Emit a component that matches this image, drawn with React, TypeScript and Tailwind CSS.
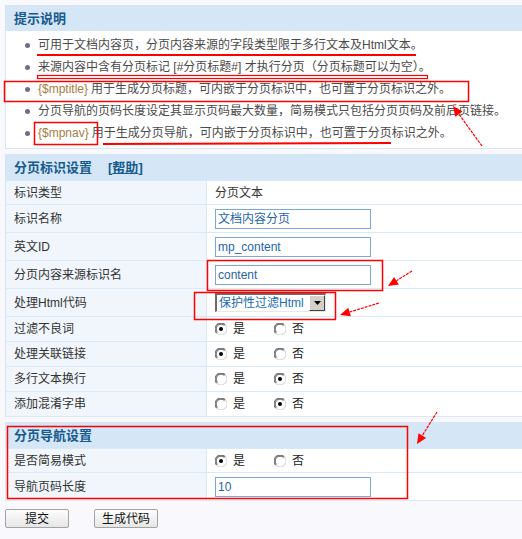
import React from "react";

const font = { fontFamily: '"Liberation Sans", "Noto Sans CJK SC", sans-serif' };

function Radio({ checked }: { checked: boolean }) {
  return (
    <svg width="12" height="12" viewBox="0 0 12 12" className="shrink-0">
      <circle cx="6" cy="6" r="5.5" fill="#ffffff" />
      <path d="M1.8 10.2 A5.5 5.5 0 0 1 10.2 1.8" fill="none" stroke="#7a7a7a" strokeWidth="1.2" />
      <path d="M10.2 1.8 A5.5 5.5 0 0 1 1.8 10.2" fill="none" stroke="#dcdcdc" strokeWidth="1.2" />
      <path d="M2.6 9.4 A4.6 4.6 0 0 1 9.4 2.6" fill="none" stroke="#404040" strokeWidth="0.8" />
      {checked && <circle cx="6" cy="6" r="2" fill="#000000" />}
    </svg>
  );
}

function YesNo({ yes }: { yes: boolean }) {
  return (
    <div className="flex items-center text-[12px] text-[#222]">
      <Radio checked={yes} />
      <span className="ml-[6px]">是</span>
      <span className="ml-[29px]">
        <Radio checked={!yes} />
      </span>
      <span className="ml-[6px]">否</span>
    </div>
  );
}

function TextBox({ value }: { value: string }) {
  return (
    <div className="w-[156px] h-[20px] border border-[#7aa7d6] bg-white flex items-center pl-[2px] text-[12px] text-[#1f64a8]">
      {value}
    </div>
  );
}

function Row({ label, h, children }: { label: string; h: string; children: React.ReactNode }) {
  return (
    <div className={`flex border-t border-[#d9e9f7] ${h}`}>
      <div className="w-[201px] shrink-0 bg-[#f0f6fb] border-r border-[#d9e9f7] flex items-center pl-[8px] text-[12px] text-[#333]">
        {label}
      </div>
      <div className="flex-1 bg-white flex items-center pl-[8px]">{children}</div>
    </div>
  );
}

function Header({ children }: { children: React.ReactNode }) {
  return (
    <div className="h-[25px] bg-[#d5e7f7] flex items-center pl-[8px] text-[13px] font-bold text-[#175a8e]">
      {children}
    </div>
  );
}

const tips: React.ReactNode[] = [
  <>可用于文档内容页，分页内容来源的字段类型限于多行文本及Html文本。</>,
  <>来源内容中含有分页标记 [#分页标题#] 才执行分页（分页标题可以为空）。</>,
  <>
    <span className="text-[#a47d42] mr-[3px]">{"{$mptitle}"}</span>用于生成分页标题，可内嵌于分页标识中，也可置于分页标识之外。
  </>,
  <>分页导航的页码长度设定其显示页码最大数量，简易模式只包括分页页码及前后页链接。</>,
  <>
    <span className="text-[#a47d42] mr-[3px]">{"{$mpnav}"}</span>用于生成分页导航，可内嵌于分页标识中，也可置于分页标识之外。
  </>,
];

function Arrow({ x1, y1, x2, y2 }: { x1: number; y1: number; x2: number; y2: number }) {
  const dx = x2 - x1;
  const dy = y2 - y1;
  const len = Math.hypot(dx, dy);
  const ux = dx / len;
  const uy = dy / len;
  const bx = x2 - ux * 10;
  const by = y2 - uy * 10;
  const px = -uy * 4.5;
  const py = ux * 4.5;
  return (
    <g>
      <line x1={x1} y1={y1} x2={bx} y2={by} stroke="#ff0000" strokeWidth="1.2" strokeDasharray="3 1" />
      <polygon points={`${x2},${y2} ${bx + px},${by + py} ${bx - px},${by - py}`} fill="#ff0000" />
    </g>
  );
}

export default function App() {
  return (
    <div className="relative w-[522px] h-[539px] overflow-hidden bg-[#f9f9fd] pt-[5px] pl-[5px]" style={font}>
      {/* tips panel */}
      <div className="w-[530px] border border-[#d5e6f6] bg-white">
        <Header>提示说明</Header>
        <ul className="pt-[3px] pb-[4px]">
          {tips.map((t, i) => (
            <li key={i} className="h-[22px] flex items-center text-[12px] text-[#4a4a4a] whitespace-nowrap">
              <span className="ml-[19px] mr-[8px] w-[5px] h-[5px] rounded-full bg-[#6e6e8c] shrink-0" />
              {t}
            </li>
          ))}
        </ul>
      </div>

      {/* page marker settings */}
      <div className="mt-[5px] w-[530px] border border-[#d5e6f6] border-b-0">
        <Header>
          分页标识设置
          <span className="ml-[16px]">
            [<span className="underline">帮助</span>]
          </span>
        </Header>
        <Row label="标识类型" h="h-[24px]">
          <span className="text-[12px] text-[#333]">分页文本</span>
        </Row>
        <Row label="标识名称" h="h-[28px]">
          <TextBox value="文档内容分页" />
        </Row>
        <Row label="英文ID" h="h-[28px]">
          <TextBox value="mp_content" />
        </Row>
        <Row label="分页内容来源标识名" h="h-[28px]">
          <TextBox value="content" />
        </Row>
        <Row label="处理Html代码" h="h-[28px]">
          <div className="w-[111px] h-[19px] flex items-stretch bg-white border-t-2 border-l-2 border-b border-r border-t-[#6b6b6b] border-l-[#6b6b6b] border-b-[#e8e8e8] border-r-[#e8e8e8]">
            <span className="flex-1 flex items-center pl-[2px] text-[12px] text-[#1b6bb0] whitespace-nowrap overflow-hidden">
              保护性过滤Html
            </span>
            <span className="w-[16px] bg-[#d4d0c8] border border-t-white border-l-white border-b-[#404040] border-r-[#404040] flex items-center justify-center">
              <svg width="7" height="4" viewBox="0 0 7 4">
                <polygon points="0,0 7,0 3.5,4" fill="#000" />
              </svg>
            </span>
          </div>
        </Row>
        <Row label="过滤不良词" h="h-[25px]">
          <YesNo yes />
        </Row>
        <Row label="处理关联链接" h="h-[25px]">
          <YesNo yes />
        </Row>
        <Row label="多行文本换行" h="h-[25px]">
          <YesNo yes={false} />
        </Row>
        <Row label="添加混淆字串" h="h-[25px]">
          <YesNo yes={false} />
        </Row>
        <div className="border-t border-[#d9e9f7]" />
      </div>

      {/* page navigation settings */}
      <div className="mt-[5px] w-[530px] border border-[#d5e6f6] border-b-0">
        <Header>分页导航设置</Header>
        <Row label="是否简易模式" h="h-[24px]">
          <YesNo yes />
        </Row>
        <Row label="导航页码长度" h="h-[28px]">
          <TextBox value="10" />
        </Row>
        <div className="border-t border-[#d9e9f7]" />
      </div>

      <div className="mt-[8px] flex gap-[25px]">
        {["提交", "生成代码"].map((b) => (
          <button
            key={b}
            className="w-[64px] h-[19px] rounded-[2px] border border-[#a3a3a3] bg-gradient-to-b from-[#fdfdfd] to-[#e6e6e6] text-[12px] text-[#111] leading-none"
          >
            {b}
          </button>
        ))}
      </div>

      {/* hand-drawn markup layer */}
      <svg className="absolute left-0 top-0 pointer-events-none" width="522" height="539" viewBox="0 0 522 539">
        <g fill="none" stroke="#ff0000">
          <path d="M37 55 L416 55" strokeWidth="2" />
          <rect x="37.5" y="75.5" width="390" height="3" strokeWidth="1.2" />
          <rect x="4.5" y="81.5" width="464" height="20" strokeWidth="1.5" />
          <rect x="34.5" y="122.5" width="63" height="22" strokeWidth="1.5" />
          <path d="M103 144 L391 143" strokeWidth="2" />
          <rect x="207.5" y="260.5" width="175" height="30" strokeWidth="1.5" />
          <rect x="194.5" y="292.5" width="141" height="27" strokeWidth="1.5" />
          <rect x="7.5" y="426.5" width="400" height="72" strokeWidth="1.5" />
        </g>
        <Arrow x1={482} y1={146} x2={453} y2={106} />
        <Arrow x1={412} y1={271} x2={388} y2={286} />
        <Arrow x1={379} y1={303} x2={340} y2={315} />
        <Arrow x1={437} y1={412} x2={417} y2={444} />
      </svg>
    </div>
  );
}
